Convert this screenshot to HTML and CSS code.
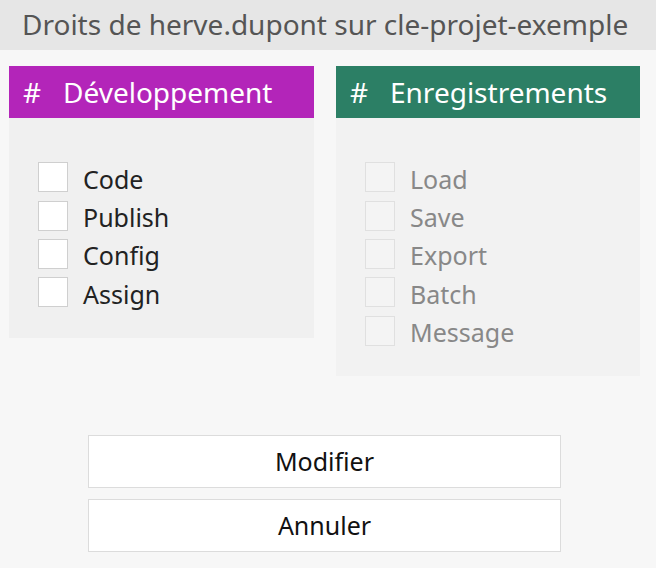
FILE: index.html
```html
<!DOCTYPE html>
<html lang="fr">
<head>
<meta charset="utf-8">
<link rel="stylesheet" href="styles.css">
</head>
<body>
<div class="titlebar">Droits de herve.dupont sur cle-projet-exemple</div>
<div class="content">
  <div class="panels">
    <section class="panel">
      <div class="panel-head purple"><span class="hash">#</span>Développement</div>
      <div class="panel-body">
        <label class="row"><span class="box"></span><span class="txt">Code</span></label>
        <label class="row"><span class="box"></span><span class="txt">Publish</span></label>
        <label class="row"><span class="box"></span><span class="txt">Config</span></label>
        <label class="row"><span class="box"></span><span class="txt">Assign</span></label>
      </div>
    </section>
    <section class="panel disabled">
      <div class="panel-head green"><span class="hash">#</span>Enregistrements</div>
      <div class="panel-body">
        <label class="row"><span class="box"></span><span class="txt">Load</span></label>
        <label class="row"><span class="box"></span><span class="txt">Save</span></label>
        <label class="row"><span class="box"></span><span class="txt">Export</span></label>
        <label class="row"><span class="box"></span><span class="txt">Batch</span></label>
        <label class="row"><span class="box"></span><span class="txt">Message</span></label>
      </div>
    </section>
  </div>
  <div class="actions">
    <button class="btn">Modifier</button>
    <button class="btn">Annuler</button>
  </div>
</div>
</body>
</html>
```
FILE: styles.css
```css
html, body {
  margin: 0;
  padding: 0;
  background: #f7f7f7;
  font-family: "Noto Sans", "Open Sans", sans-serif;
}
.titlebar {
  height: 50px;
  line-height: 48px;
  background: #e6e6e6;
  color: #555;
  font-size: 28px;
  padding-left: 22px;
  white-space: nowrap;
}
.content {
  padding: 16px 16px 0 9px;
}
.panels {
  display: grid;
  grid-template-columns: 305px 304px;
  column-gap: 22px;
  align-items: start;
}
.panel-head {
  height: 52px;
  line-height: 52px;
  color: #fff;
  font-size: 28px;
  padding-left: 14px;
  white-space: nowrap;
}
.panel-head .hash {
  display: inline-block;
  width: 40px;
}
.purple { background: #b325b9; }
.green { background: #2c7f65; }
.panel-body {
  background: #f0f0f0;
  padding: 40px 0 26px 29px;
}
.disabled .panel-body { background: #f2f2f2; }
.row {
  display: flex;
  align-items: center;
  height: 38.4px;
  font-size: 25px;
  color: #222;
}
.txt {
  padding-top: 3px;
}
.box {
  width: 28px;
  height: 28px;
  border: 1px solid #cfcfcf;
  background: #fff;
  margin-right: 15px;
  flex: none;
}
.disabled .row { color: #888; }
.disabled .box {
  background: #f4f4f4;
  border-color: #e0e0e0;
}
.actions {
  display: flex;
  flex-direction: column;
  align-items: center;
  gap: 11px;
  margin-top: 59px;
}
.btn {
  width: 473px;
  height: 53px;
  background: #fff;
  border: 1px solid #dcdcdc;
  font-family: "Noto Sans", "Open Sans", sans-serif;
  font-size: 25px;
  color: #111;
  padding: 0;
}
```
